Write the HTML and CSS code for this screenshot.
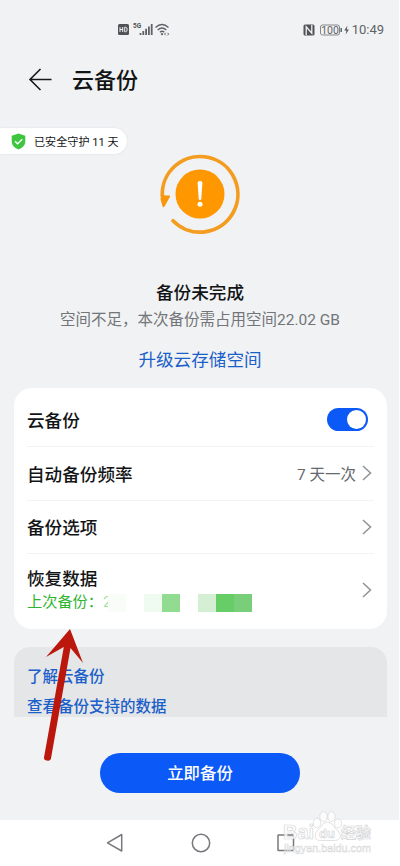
FILE: index.html
```html
<!DOCTYPE html>
<html lang="zh-CN">
<head>
<meta charset="utf-8">
<title>云备份</title>
<link rel="stylesheet" href="styles.css">
</head>
<body>
<div class="screen">
  <header class="status">
    <svg class="signals" width="54" height="16" viewBox="0 0 54 16">
      <rect x="1" y="3" width="11" height="11" rx="1.5" fill="#505255"/>
      <path d="M3 6v5M5.700 6v5M3 8.500h2.700M7.700 6.200v4.600h1q1.500-.3 1.500-2.300t-1.500-2.300z" fill="none" stroke="#f1f2f4" stroke-width="1"/>
      <text x="16" y="7" class="tiny">5G</text>
      <path d="M23.500 14v-2M26.300 14v-4M29.100 14v-6.300M31.900 14v-8.500M34.700 14v-11" stroke="#606265" stroke-width="1.800"/>
      <path d="M38.500 6.500q6.500-6 13 0M40.700 9q4.300-3.800 8.600 0M42.900 11.300q2.200-1.900 4.400 0" fill="none" stroke="#606265" stroke-width="1.400"/>
      <circle cx="45" cy="13.200" r="1.100" fill="#606265"/>
      <path d="M48.700 11.900l-1.200 1.200 1.200 1.200M50.500 11.900l1.200 1.200-1.200 1.200" fill="none" stroke="#606265" stroke-width="1"/>
    </svg>
    <div class="status-right">
      <svg width="12" height="12" viewBox="0 0 12 12">
        <path d="M2 .5h8q1.500 0 1.500 1.500v8q0 1.500-1.500 1.500H2Q.5 11.500.5 10V2Q.5.500 2 .500z" fill="#505255"/>
        <path d="M3.200 11V2.800l5.600 6.400V1" fill="none" stroke="#f1f2f4" stroke-width="1.300"/>
      </svg>
      <svg class="battery" width="30" height="12" viewBox="0 0 30 12">
        <rect x=".5" y="1" width="19" height="10" rx="2" fill="none" stroke="#85878a"/>
        <path d="M21.200 4v4" stroke="#606265" stroke-width="1.500"/>
        <text x="10" y="9.800" class="charge">100</text>
        <path d="M27.500 1.500l-3.200 5h2.200l-.8 4 3.200-5h-2.200z" fill="#505255"/>
      </svg>
      <span class="clock">10:49</span>
    </div>
  </header>

  <div class="title">
    <svg width="24" height="24" viewBox="0 0 24 24"><path d="M23.500 11.500H2M12.500 1L2 11.500l10.500 10.500" fill="none" stroke="#17181a" stroke-width="1.600"/></svg>
    <h1>云备份</h1>
  </div>

  <div class="guard">
    <svg width="15" height="17" viewBox="0 0 15 17"><path d="M7.500.5l6.800 2.300v6q0 5-6.800 7.700Q.7 13.800.7 8.800v-6z" fill="#3fc640"/><path d="M4 8.300l2.600 2.500 4.600-4.500" fill="none" stroke="#fff" stroke-width="1.300"/></svg>
    <span>已安全守护 11 天</span>
  </div>

  <section class="state">
    <svg width="82" height="82" viewBox="0 0 82 82">
      <path d="M3.300 43A37.800 37.800 0 1 1 14 67.700" fill="none" stroke="#f39c1f" stroke-width="3.700" stroke-linecap="round"/>
      <path d="M2.300 42.200L10.300 42.400Q11.500 42.600 11 43.700L5.500 53.500Q4.300 55.200 3.500 53.300L1.500 46z" fill="#fa960c"/>
      <circle cx="41" cy="41" r="24.500" fill="#ff9700"/>
      <path d="M38.600 29.800q0-1.900 2.400-1.900t2.400 1.900l-1.100 16.200q-.2 1-1.300 1t-1.300-1z" fill="#fff"/>
      <circle cx="41" cy="51.300" r="2.500" fill="#fff"/>
    </svg>
    <h2>备份未完成</h2>
    <p>空间不足，本次备份需占用空间22.02 GB</p>
    <a>升级云存储空间</a>
  </section>

  <section class="card">
    <div class="row first"><span>云备份</span><i class="toggle"></i></div>
    <div class="row"><span>自动备份频率</span><span class="value">7 天一次</span><svg class="chevron" width="10" height="16" viewBox="0 0 10 16"><path d="M1 1l7.500 7L1 15"/></svg></div>
    <div class="row"><span>备份选项</span><svg class="chevron" width="10" height="16" viewBox="0 0 10 16"><path d="M1 1l7.500 7L1 15"/></svg></div>
    <div class="row last">
      <div class="restore">
        <span>恢复数据</span>
        <div class="last-time"><span>上次备份：</span><span class="digit">2</span>
          <div class="mosaic"><i class="m1"></i><i></i><i class="m2"></i><i class="m3"></i><i></i><i class="m4"></i><i class="m5"></i><i class="m6"></i></div>
        </div>
      </div>
      <svg class="chevron" width="10" height="16" viewBox="0 0 10 16"><path d="M1 1l7.500 7L1 15"/></svg>
    </div>
  </section>

  <section class="help"><a>了解云备份</a><a>查看备份支持的数据</a></section>

  <button class="primary">立即备份</button>

  <nav class="nav">
    <svg width="18" height="20" viewBox="0 0 18 20"><path d="M15.700 1.500v16.500L1.500 9.800z"/></svg>
    <svg width="20" height="20" viewBox="0 0 20 20"><circle cx="10" cy="10" r="8.700"/></svg>
    <svg width="18" height="18" viewBox="0 0 18 18"><rect x="1" y="1" width="15.500" height="15.500" rx=".5"/></svg>
  </nav>

  <svg class="arrow" width="40" height="134" viewBox="0 0 40 134">
    <path d="M28 1L41 35L28.500 20L8.900 131Q7.500 133.500 5 132.500Q1.800 132.500 2 129.500L21.800 19L4 29z" fill="#bb170c"/>
  </svg>

  <svg class="watermark" width="100" height="48" viewBox="0 0 100 48">
    <text x="3" y="31" class="wm-big" textLength="31" lengthAdjust="spacingAndGlyphs">Bai</text>
    <g class="paw">
      <ellipse cx="37" cy="15" rx="3.700" ry="4.800"/><ellipse cx="43.500" cy="8.500" rx="3.700" ry="5"/>
      <ellipse cx="51.500" cy="8.500" rx="3.700" ry="5"/><ellipse cx="58" cy="15.500" rx="3.500" ry="4.500"/>
      <path d="M47.500 14Q43 14 40 20Q34.500 24 35 29Q36 33 42 32.500H53Q60 33 60.500 28Q60 24 55 20Q52 14 47.500 14z"/>
    </g>
    <text x="39" y="30" class="wm-du">du</text>
    <text x="61" y="30" class="wm-cn">经验</text>
    <text x="4" y="44" class="wm-url" textLength="87" lengthAdjust="spacingAndGlyphs">jingyan.baidu.com</text>
  </svg>
</div>
</body>
</html>
```
FILE: styles.css
```css
* { box-sizing: border-box; }
body { margin: 0; }
h1, h2, p { margin: 0; font-weight: 500; }
svg { display: block; flex: none; overflow: visible; }

.screen {
  position: relative;
  display: flex;
  flex-direction: column;
  width: 400px;
  height: 866px;
  overflow: hidden;
  background: #f1f2f4;
  box-shadow: inset -1px 0 #fff;
  color: #131416;
  font-family: Roboto, "Noto Sans CJK SC", sans-serif;
}

.status { display: flex; justify-content: space-between; height: 58px; padding: 21px 16px 0 117px; }
.status-right { display: flex; align-items: center; height: 17px; gap: 5px; }
.clock { font-size: 13px; color: #606265; margin-left: -3px; line-height: 17px; }
.tiny { font: bold 6.5px Roboto, sans-serif; fill: #505255; }
.charge { font: 10.5px Roboto, sans-serif; fill: #606265; text-anchor: middle; }

.title { display: flex; align-items: center; height: 44px; padding-left: 28px; gap: 20px; }
.title h1 { padding-top: 1px; font-size: 22px; line-height: 32px; }

.guard {
  display: flex;
  align-items: center;
  align-self: flex-start;
  gap: 8px;
  width: 127px;
  height: 26px;
  margin-top: 26px;
  padding-left: 11px;
  border-radius: 0 13px 13px 0;
  background: #fff;
  box-shadow: 0 0 2px #d9dadd;
  font-size: 11.1px;
  white-space: nowrap;
}

.state { display: flex; flex-direction: column; align-items: center; height: 234px; }
.state svg { margin-top: -1px; }
.state h2 { margin-top: 44px; font-size: 17.6px; line-height: 28px; }
.state p { font-size: 15.5px; font-weight: 400; line-height: 26px; color: #737578; white-space: nowrap; }
.state a { margin-top: 13px; font-size: 17.6px; line-height: 28px; color: #1b5fc9; }

.card { height: 241px; margin: 0 13px 0 14px; padding: 0 13px; border-radius: 18px; background: #fff; }
.row { display: flex; align-items: center; justify-content: space-between; height: 53.5px; border-top: 1px solid #f3f3f4; font-size: 17.6px; font-weight: 500; }
.row.first { height: 58px; padding: 4px 6px 0 0; border: 0; }
.row.last { height: 72px; }
.value { margin: 0 6px 0 auto; color: #66686b; font-size: 15.5px; font-weight: 400; }
.chevron { margin-right: 2px; }
.chevron path { fill: none; stroke: #909295; stroke-width: 1.5; }
.toggle { width: 41px; height: 23px; padding: 2px; border-radius: 12px; background: #0b59f7; }
.toggle::after { content: ""; display: block; width: 19px; height: 19px; margin-left: auto; border-radius: 50%; background: #fff; }
.restore { display: flex; flex-direction: column; line-height: 24px; }
.last-time { display: flex; align-items: center; height: 22px; color: #2fb42f; font-size: 15.2px; font-weight: 400; }
.digit { width: 5px; overflow: visible; color: #a9dfa9; }
.mosaic { display: flex; margin-top: 2px; }
.mosaic i { width: 18px; height: 18px; }
.mosaic .m1 { background: #f8fdf8; }
.mosaic .m2 { background: #effaf0; }
.mosaic .m3 { background: #92dc92; }
.mosaic .m4 { background: #d4efd4; }
.mosaic .m5 { background: #67cd67; }
.mosaic .m6 { background: #79cf79; }

.help { display: flex; flex-direction: column; height: 70px; margin: 18px 13px 0 14px; padding: 15px 13px 0; border-radius: 16px 16px 0 0; background: #e5e6e8; color: #1b5fc9; font-size: 15.5px; line-height: 30px; font-weight: 500; }

.primary { align-self: center; width: 200px; height: 40px; margin-top: 36px; padding: 1px 0 0; border: 0; border-radius: 20px; background: #0b59f7; color: #fff; font: 500 16.4px/40px Roboto, "Noto Sans CJK SC", sans-serif; }

.nav { display: flex; align-items: center; justify-content: space-between; height: 46px; margin-top: 27px; padding: 0 105px 0 106px; background: #fff; }
.nav svg { fill: none; stroke: #77797c; stroke-width: 1.5; stroke-linejoin: round; }

.arrow { position: absolute; left: 42px; top: 628px; }

.watermark { position: absolute; left: 280px; top: 808px; fill: #fff; fill-opacity: .75; stroke: #d5d6d8; stroke-width: .7; }
.wm-big { font: bold 21px "Liberation Sans", sans-serif; }
.wm-du { font: bold 13px "Liberation Sans", sans-serif; }
.wm-cn { font: bold 15px "Noto Sans CJK SC", sans-serif; }
.wm-url { font: 11px "Liberation Sans", sans-serif; stroke-width: .5; }
```
